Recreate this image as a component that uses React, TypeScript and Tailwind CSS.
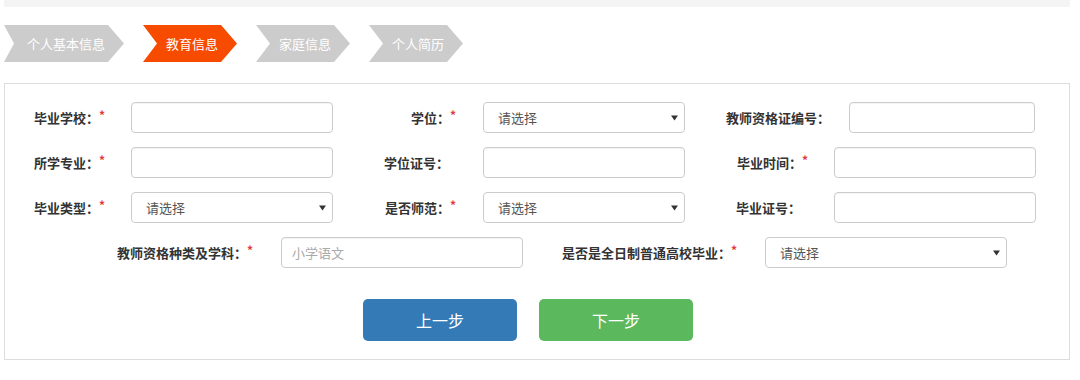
import React from "react"

const steps = [
  { label: "个人基本信息", active: false, first: true },
  { label: "教育信息", active: true, first: false },
  { label: "家庭信息", active: false, first: false },
  { label: "个人简历", active: false, first: false },
]

function Star() {
  return <span className="text-[12px] leading-none text-[#e4393c] align-[3px]">*</span>
}

function Label({ text, req, w, pr }: { text: string; req?: boolean; w: string; pr: string }) {
  return (
    <div
      className={`${w} ${pr} h-[31px] shrink-0 overflow-hidden text-right text-[13px] font-bold text-[#333] leading-[31px] whitespace-nowrap`}
    >
      {text}
      {req && <Star />}
    </div>
  )
}

function TextBox({ w, placeholder }: { w: string; placeholder?: string }) {
  return (
    <div
      className={`${w} h-[31px] shrink-0 rounded-[4px] border border-[#ccc] bg-white px-[10px] text-[13px] leading-[29px] text-[#aaa] shadow-[inset_0_1px_1px_rgba(0,0,0,0.05)]`}
    >
      {placeholder}
    </div>
  )
}

function SelectBox({ w }: { w: string }) {
  return (
    <div
      className={`${w} h-[31px] shrink-0 rounded-[4px] border border-[#ccc] bg-white pl-[14px] pr-[6px] flex items-center justify-between text-[13px] text-[#555]`}
    >
      <span>请选择</span>
      <svg width="7" height="6" viewBox="0 0 7 6">
        <path d="M0 0.5h7L3.5 5.5z" fill="#333" />
      </svg>
    </div>
  )
}

export default function App() {
  return (
    <div className="w-[1080px] h-[380px] bg-white font-['Noto_Sans_CJK_SC','Noto_Sans',sans-serif]">
      <div className="ml-[4px] w-[1066px] h-[7px] bg-[#f4f4f4] rounded-b-[2px]" />

      {/* steps */}
      <div className="mt-[18px] ml-[4px] flex gap-[19px]">
        {steps.map((s) => (
          <div
            key={s.label}
            className={`h-[37px] flex items-center justify-center text-[13px] text-white ${
              s.first
                ? "w-[120px] pl-[4px] [clip-path:polygon(0_0,104px_0,100%_50%,104px_100%,0_100%,10px_50%)]"
                : "w-[94px] pl-[4px] [clip-path:polygon(0_0,78px_0,100%_50%,78px_100%,0_100%,14px_50%)]"
            } ${s.active ? "bg-[#f74c00]" : "bg-[#cccccc]"}`}
          >
            {s.label}
          </div>
        ))}
      </div>

      {/* form panel */}
      <div className="mt-[21px] ml-[4px] w-[1066px] border border-[#ddd] pt-[18px] pb-[18px]">
        <div className="flex flex-col gap-[14px]">
          <div className="flex h-[31px] items-center">
            <Label text="毕业学校：" req w="w-[126px]" pr="pr-[26px]" />
            <TextBox w="w-[202px]" />
            <Label text="学位：" req w="w-[150px]" pr="pr-[27px]" />
            <SelectBox w="w-[202px]" />
            <Label text="教师资格证编号：" w="w-[164px]" pr="pr-[19px]" />
            <TextBox w="w-[186px]" />
          </div>
          <div className="flex h-[31px] items-center">
            <Label text="所学专业：" req w="w-[126px]" pr="pr-[26px]" />
            <TextBox w="w-[202px]" />
            <Label text="学位证号：" w="w-[150px]" pr="pr-[34px]" />
            <TextBox w="w-[202px]" />
            <Label text="毕业时间：" req w="w-[149px]" pr="pr-[26px]" />
            <TextBox w="w-[202px]" />
          </div>
          <div className="flex h-[31px] items-center">
            <Label text="毕业类型：" req w="w-[126px]" pr="pr-[26px]" />
            <SelectBox w="w-[202px]" />
            <Label text="是否师范：" req w="w-[150px]" pr="pr-[27px]" />
            <SelectBox w="w-[202px]" />
            <Label text="毕业证号：" w="w-[149px]" pr="pr-[33px]" />
            <TextBox w="w-[202px]" />
          </div>
          <div className="flex h-[31px] items-center">
            <Label text="教师资格种类及学科：" req w="w-[276px]" pr="pr-[28px]" />
            <TextBox w="w-[242px]" placeholder="小学语文" />
            <Label text="是否是全日制普通高校毕业：" req w="w-[242px]" pr="pr-[28px]" />
            <SelectBox w="w-[242px]" />
          </div>
        </div>

        <div className="mt-[31px] ml-[358px] flex gap-[22px]">
          <button className="w-[154px] h-[42px] rounded-[5px] bg-[#337ab7] text-[16px] text-white">上一步</button>
          <button className="w-[154px] h-[42px] rounded-[5px] bg-[#5cb85c] text-[16px] text-white">下一步</button>
        </div>
      </div>
    </div>
  )
}
